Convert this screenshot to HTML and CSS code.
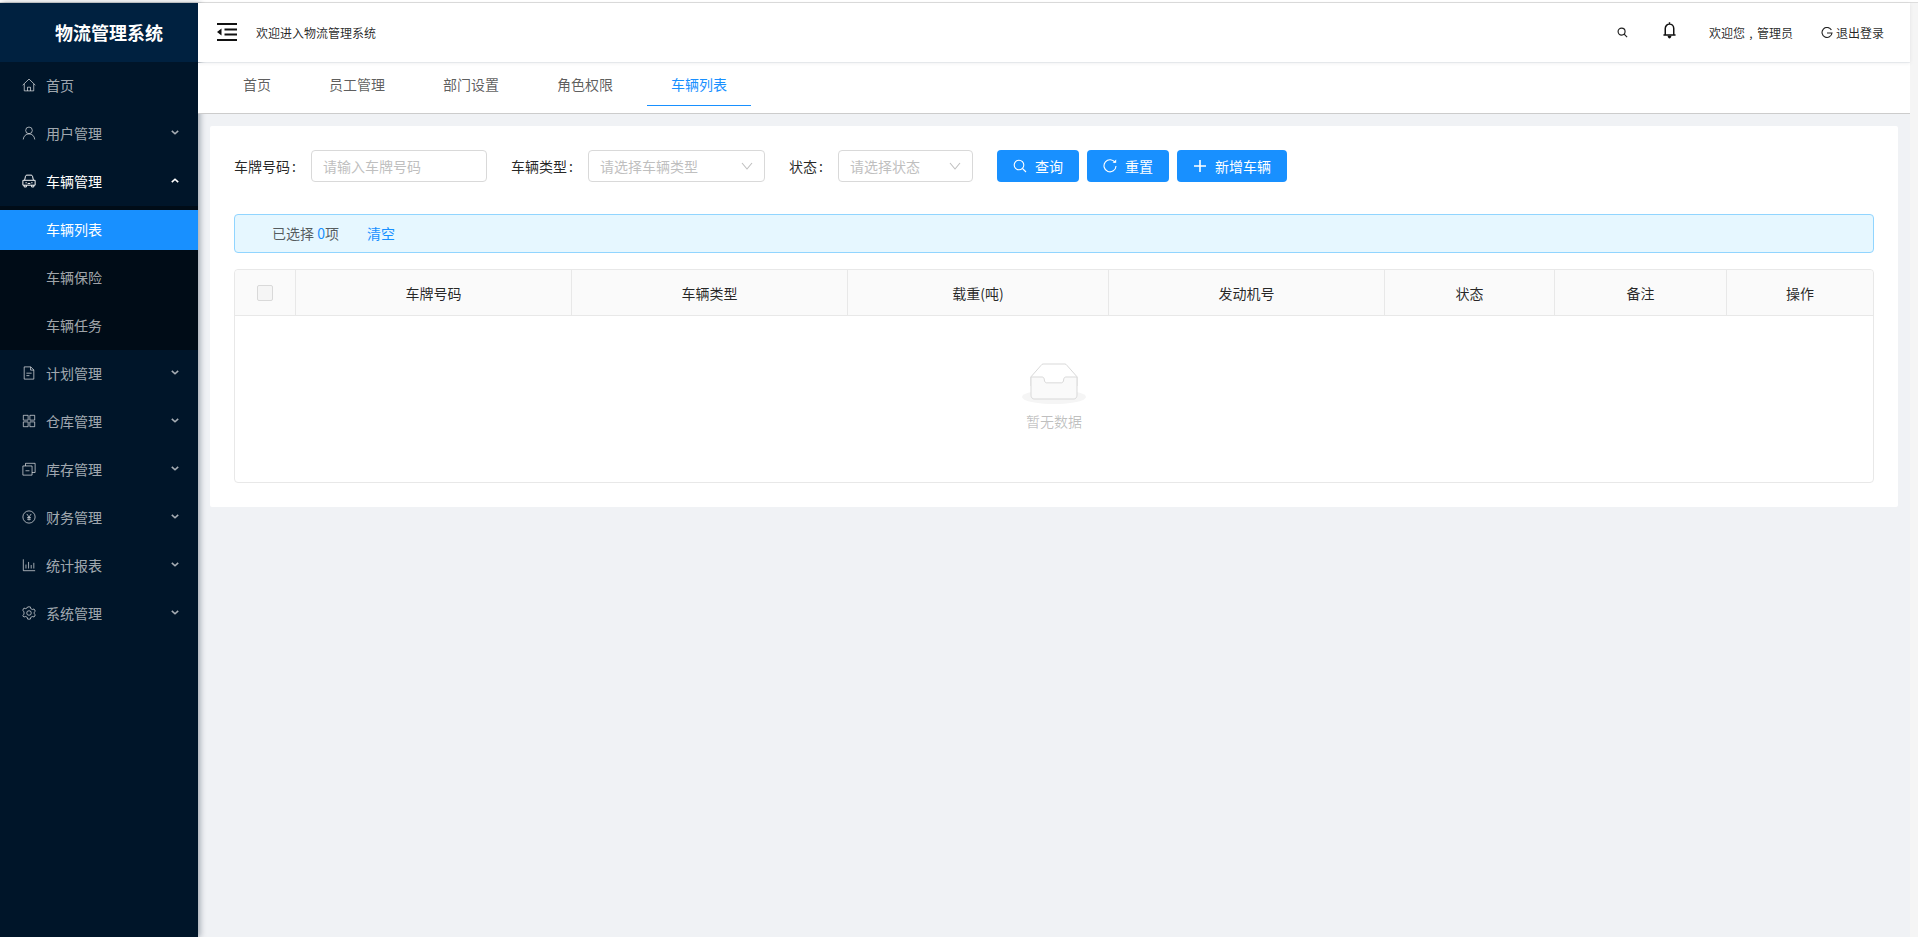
FILE: index.html
```html
<!DOCTYPE html>
<html lang="zh-CN">
<head>
<meta charset="utf-8">
<title>物流管理系统</title>
<link rel="stylesheet" href="styles.css">
</head>
<body>
<div class="topline"></div>
<div class="app">
  <aside class="sider">
    <div class="logo"><h1>物流管理系统</h1></div>
    <nav class="menu">
      <a class="item"><svg class="ico" viewBox="0 0 16 16"><path d="M.8 8.200 8 1.200l7.200 7M2.600 6.800v7.900h10.800V6.800M6.300 14.700v-4.200h3.400v4.200"/></svg><span>首页</span></a>
      <a class="item"><svg class="ico" viewBox="0 0 16 16"><circle cx="8" cy="5" r="3.800"/><path d="M1.400 15.400C1.800 11.400 4.500 9 8 9s6.200 2.400 6.600 6.400"/></svg><span>用户管理</span><svg class="chev" viewBox="0 0 10 6"><path d="M1 1l4 3.600L9 1"/></svg></a>
      <a class="item open"><svg class="ico" viewBox="0 0 16 16"><path d="M3 7l1-4.500C4.200 1.700 4.800 1.300 5.500 1.300h5c.7 0 1.300.4 1.500 1.200L13 7M1 7.200h14v5.600H1zM2.500 12.800v2h2.500v-2M11 12.800v2h2.500v-2M4 10h1.500M10.500 10H12M6.500 10.800h3"/></svg><span>车辆管理</span><svg class="chev" viewBox="0 0 10 6"><path d="M1 5l4-3.600L9 5"/></svg></a>
      <div class="sub">
        <a class="item subitem selected"><span>车辆列表</span></a>
        <a class="item subitem"><span>车辆保险</span></a>
        <a class="item subitem"><span>车辆任务</span></a>
      </div>
      <a class="item"><svg class="ico" viewBox="0 0 16 16"><path d="M2.500 1h7.500l3.500 3.500V15h-11zM9.800 1v3.700h3.700M5 8.200h6M5 11h3.500"/></svg><span>计划管理</span><svg class="chev" viewBox="0 0 10 6"><path d="M1 1l4 3.600L9 1"/></svg></a>
      <a class="item"><svg class="ico" viewBox="0 0 16 16"><path d="M1.500 1.500h5.500V7H1.500zM9 1.500h5.500V7H9zM1.500 9H7v5.500H1.500zM9 9h5.500v5.500H9z"/></svg><span>仓库管理</span><svg class="chev" viewBox="0 0 10 6"><path d="M1 1l4 3.600L9 1"/></svg></a>
      <a class="item"><svg class="ico" viewBox="0 0 16 16"><path d="M1 4.500h10.500V15H1zM4 4.500V1.500h11V12h-3.500M4 10h4.500"/></svg><span>库存管理</span><svg class="chev" viewBox="0 0 10 6"><path d="M1 1l4 3.600L9 1"/></svg></a>
      <a class="item"><svg class="ico" viewBox="0 0 16 16"><circle cx="8" cy="8" r="7"/><path d="M5.500 4.500 8 8l2.500-3.500M5.800 8.500h4.400M5.800 10.500h4.400M8 8v4"/></svg><span>财务管理</span><svg class="chev" viewBox="0 0 10 6"><path d="M1 1l4 3.600L9 1"/></svg></a>
      <a class="item"><svg class="ico" viewBox="0 0 16 16"><path d="M1.500 1.500v13h13.500M4.500 12V7.500M7.500 12V4.500M10.500 12V8M13.500 12V5.500"/></svg><span>统计报表</span><svg class="chev" viewBox="0 0 10 6"><path d="M1 1l4 3.600L9 1"/></svg></a>
      <a class="item"><svg class="ico" viewBox="0 0 16 16"><circle cx="8" cy="8" r="2.600"/><path d="M6.500 1h3l.5 2 1.800 1 2-.6 1.400 2.600-1.500 1.400v1.200l1.500 1.400-1.400 2.600-2-.6-1.800 1-.5 2h-3l-.5-2-1.800-1-2 .6L.8 11l1.500-1.400V6.400L.8 5l1.400-2.600 2 .6L6 2z"/></svg><span>系统管理</span><svg class="chev" viewBox="0 0 10 6"><path d="M1 1l4 3.600L9 1"/></svg></a>
    </nav>
  </aside>
  <div class="main">
    <header class="header">
      <svg class="collapse" viewBox="0 0 20 18"><path class="bars" d="M0 1h20M7.500 6.500H20M7.500 11.500H20M0 17h20"/><path class="tip" d="M4.500 5.500v7L0 9z"/></svg>
      <span class="welcome">欢迎进入物流管理系统</span>
      <div class="hright">
        <svg class="h-search" viewBox="0 0 12 12"><circle cx="5" cy="5" r="3.800"/><path d="M7.800 7.800 11 11"/></svg>
        <svg class="h-bell" viewBox="0 0 12 16"><path d="M6 .2v1.800M2 11.800V6.200C2 3.700 3.800 2 6 2s4 1.700 4 4.200v5.600M.3 12.200h11.400"/><path class="fillp" d="M4.200 13h3.600C7.600 14.800 6.800 15.600 6 15.600S4.400 14.800 4.200 13z"/></svg>
        <span class="h-user">欢迎您<i class="comma">,</i>管理员</span>
        <span class="h-out"><svg class="h-logout" viewBox="0 0 12 12"><path d="M10.400 3A5 5 0 1 0 11 6H6"/></svg>退出登录</span>
      </div>
    </header>
    <div class="tabs">
      <a class="tab">首页</a>
      <a class="tab">员工管理</a>
      <a class="tab">部门设置</a>
      <a class="tab">角色权限</a>
      <a class="tab active">车辆列表</a>
    </div>
    <main class="content">
      <section class="card">
        <form class="filter">
          <label class="lbl">车牌号码<i class="colon">:</i></label>
          <div class="field w-plate">请输入车牌号码</div>
          <label class="lbl">车辆类型<i class="colon">:</i></label>
          <div class="field w-type">请选择车辆类型<svg class="arrow" viewBox="0 0 12 8"><path d="M1 1l5 6 5-6"/></svg></div>
          <label class="lbl">状态<i class="colon">:</i></label>
          <div class="field w-status">请选择状态<svg class="arrow" viewBox="0 0 12 8"><path d="M1 1l5 6 5-6"/></svg></div>
          <div class="btns">
            <button type="button" class="btn"><svg viewBox="0 0 14 14"><circle cx="6" cy="6" r="4.800"/><path d="M9.500 9.500 13 13"/></svg>查询</button>
            <button type="button" class="btn"><svg viewBox="0 0 14 14"><path d="M12.200 3.800A6 6 0 1 0 13 7"/><path class="tipw" d="M9.500 3.800h3.700V.5z"/></svg>重置</button>
            <button type="button" class="btn"><svg viewBox="0 0 14 14"><path class="thick" d="M7 1v12M1 7h12"/></svg>新增车辆</button>
          </div>
        </form>
        <div class="alert"><span class="alert-text">已选择 <b>0</b>项</span><a class="clear">清空</a></div>
        <div class="table">
          <div class="thead">
            <div class="th"><span class="check"></span></div>
            <div class="th">车牌号码</div>
            <div class="th">车辆类型</div>
            <div class="th">载重(吨)</div>
            <div class="th">发动机号</div>
            <div class="th">状态</div>
            <div class="th">备注</div>
            <div class="th">操作</div>
          </div>
          <div class="empty">
            <svg width="64" height="41" viewBox="0 0 64 41"><g transform="translate(0 1)" fill="none" fill-rule="evenodd"><ellipse fill="#F5F5F5" cx="32" cy="33" rx="32" ry="7"/><g fill-rule="nonzero" stroke="#D9D9D9"><path d="M55 12.760L44.854 1.258C44.367.474 43.656 0 42.907 0H21.093c-.749 0-1.460.474-1.947 1.257L9 12.761V22h46v-9.240z"/><path d="M41.613 15.931c0-1.605.994-2.930 2.227-2.931H55v18.137C55 33.260 53.680 35 52.050 35h-40.100C10.320 35 9 33.259 9 31.137V13h11.160c1.233 0 2.227 1.323 2.227 2.928v.022c0 1.605 1.005 2.901 2.237 2.901h14.752c1.232 0 2.237-1.308 2.237-2.913v-.007z" fill="#FAFAFA"/></g></g></svg>
            <p>暂无数据</p>
          </div>
        </div>
      </section>
    </main>
  </div>
  <div class="scrolltrack"></div>
</div>
</body>
</html>
```

FILE: styles.css
```css
* { box-sizing: border-box; }
html, body { height: 100%; margin: 0; }
body {
  overflow: hidden;
  display: flex;
  flex-direction: column;
  background: #f0f2f5;
  font: 14px/22px "Noto Sans CJK SC", "Liberation Sans", sans-serif;
  color: rgba(0, 0, 0, .65);
}
.topline { height: 3px; flex: none; background: #fff; border-bottom: 1px solid #ddd; }
.app { flex: 1; display: flex; min-height: 0; }

/* sidebar */
.sider {
  width: 198px; flex: none; background: #001529; color: rgba(255, 255, 255, .65);
  position: relative; z-index: 1; box-shadow: 2px 0 6px rgba(0, 21, 41, .35);
}
.logo { height: 59px; background: #002140; padding-left: 55px; padding-bottom: 2px; display: flex; align-items: center; }
.logo h1 { margin: 0; font-size: 18px; font-weight: 700; color: #fff; line-height: 24px; }
.menu { display: block; padding-top: 4px; }
.item { display: flex; align-items: center; height: 40px; margin-bottom: 8px; padding: 0 0 2px 22px; position: relative; }
.item > span { font-size: 14px; }
.ico { width: 14px; height: 14px; margin-right: 10px; flex: none; fill: none; stroke: currentColor; stroke-width: 1.1; }
.chev { position: absolute; left: 171px; top: 16px; width: 8px; height: 5px; fill: none; stroke: currentColor; stroke-width: 2; }
.open { color: #fff; margin-bottom: 4px; }
.sub { background: #000c17; padding: 4px 0; margin-bottom: 4px; }
.subitem { padding-left: 46px; }
.subitem:last-child { margin-bottom: 0; }
.selected { background: #1890ff; color: #fff; }

/* main */
.main { flex: 1; min-width: 0; display: flex; flex-direction: column; }
.header {
  height: 59px; flex: none; background: #fff; display: flex; align-items: center; padding: 0 26px 0 19px;
  position: relative; z-index: 3; box-shadow: 0 1px 4px rgba(0, 21, 41, .08); color: rgba(0, 0, 0, .85);
  font-size: 12px;
}
.collapse { width: 20px; height: 18px; margin-right: 19px; position: relative; top: -1px; }
.collapse .bars { fill: none; stroke: #111; stroke-width: 2; }
.collapse .tip { fill: #111; }
.hright { margin-left: auto; display: flex; align-items: center; }
.h-search { width: 11px; height: 11px; fill: none; stroke: #222; stroke-width: 1.3; margin-right: 35px; }
.h-bell { width: 13px; height: 17px; fill: none; stroke: #111; stroke-width: 1.4; margin-right: 33px; position: relative; top: -2px; }
.h-bell .fillp { fill: #111; stroke: none; }
.h-user { margin-right: 28px; }
.comma { font-style: normal; display: inline-block; width: 12px; text-align: center; }
.h-out { display: flex; align-items: center; }
.h-logout { width: 12px; height: 12px; margin-right: 3px; fill: none; stroke: #222; stroke-width: 1.1; }

.tabs {
  height: 51px; flex: none; background: #fff; padding: 0 0 7px 21px; display: flex; gap: 10px;
  border-bottom: 1px solid #ccc; position: relative; z-index: 2; margin-top: 1px;
}
.tab { padding: 10px 24px 0; border-bottom: 1px solid transparent; }
.tab.active { color: #1890ff; border-bottom-color: #1890ff; }

.content { flex: 1; padding: 12px; min-height: 0; }
.card { background: #fff; border-radius: 2px; padding: 24px; }

.filter { display: flex; align-items: center; height: 32px; }
.lbl { color: rgba(0, 0, 0, .85); white-space: nowrap; }
.colon { font-style: normal; display: inline-block; width: 5px; margin: 0 14px 0 2px; }
.field {
  height: 32px; border: 1px solid #d9d9d9; border-radius: 4px; padding-left: 11px; margin-right: 24px;
  color: #bfbfbf; line-height: 30px; position: relative; white-space: nowrap;
}
.w-plate { width: 176px; }
.w-type { width: 177px; }
.w-status { width: 135px; }
.arrow { position: absolute; right: 11px; top: 11px; width: 12px; height: 8px; fill: none; stroke: #bfbfbf; stroke-width: 1.1; }
.btns { display: flex; gap: 8px; }
.btn {
  height: 32px; padding: 0 16px; border: 0; border-radius: 4px; background: #1890ff; color: #fff;
  font: inherit; display: flex; align-items: center; gap: 8px;
}
.btn svg { width: 14px; height: 14px; fill: none; stroke: #fff; stroke-width: 1.1; }
.btn .tipw { fill: #fff; stroke: none; }
.btn .thick { stroke-width: 1.6; }

.alert {
  margin-top: 32px; height: 39px; background: #e6f7ff; border: 1px solid #91d5ff; border-radius: 4px;
  padding: 0 0 2px 37px; display: flex; align-items: center; gap: 28px;
}
.alert b { font-weight: 400; color: #1890ff; }
.clear { color: #1890ff; }

.table { margin-top: 16px; border: 1px solid #e8e8e8; border-radius: 4px; }
.thead {
  display: grid; grid-template-columns: 61px 276px 276px 261px 276px 170px 172px 146px; height: 46px;
  background: #fafafa; border-bottom: 1px solid #e8e8e8; border-radius: 4px 4px 0 0; color: rgba(0, 0, 0, .85);
}
.th { display: flex; align-items: center; justify-content: center; border-right: 1px solid #e8e8e8; }
.th:last-child { border-right: 0; }
.check { width: 16px; height: 16px; background: #f5f5f5; border: 1px solid #d9d9d9; border-radius: 2px; }
.empty { height: 166px; padding-top: 47px; display: flex; flex-direction: column; align-items: center; }
.empty p { margin: 6px 0 0; color: rgba(0, 0, 0, .25); }

.scrolltrack { width: 8px; flex: none; background: #f5f5f5; }
```
